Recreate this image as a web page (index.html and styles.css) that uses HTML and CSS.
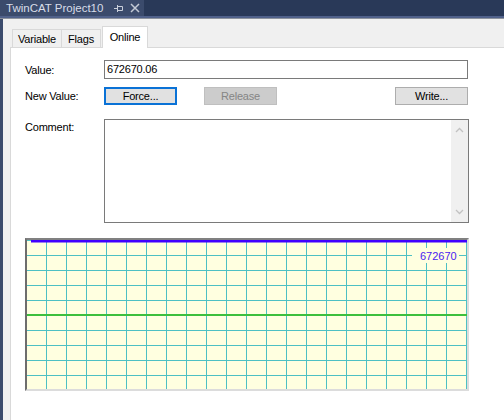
FILE: index.html
```html
<!DOCTYPE html>
<html lang="en">
<head>
    <meta charset="UTF-8">
    <title>TwinCAT Project10 - Online</title>
    <link rel="stylesheet" href="styles.css">
</head>
<body>
    <div class="titlebar">
        <div class="doc-tab">
            <span class="doc-name">TwinCAT Project10</span>
            <svg class="pin" width="9" height="8" viewBox="0 0 9 8">
                <path d="M0 4.5H3.5M3.5 1V8M3.5 2.5H8.5V6.5H3.5" fill="none" stroke="#c9cfdb" stroke-width="1"/>
            </svg>
            <svg class="close" width="10" height="10" viewBox="0 0 10 10">
                <path d="M1 1L9 9M9 1L1 9" fill="none" stroke="#c4cad6" stroke-width="1.5"/>
            </svg>
        </div>
    </div>
    <div class="frame-line"></div>

    <div class="main">
        <div class="edge"></div>
        <div class="pane">
            <div class="tabstrip">
                <div class="tab tab-variable">Variable</div>
                <div class="tab tab-flags">Flags</div>
                <div class="tab tab-online selected">Online</div>
            </div>

            <div class="page">
                <div class="row row-value">
                    <label class="field-label">Value:</label>
                    <div class="value-box">672670.06</div>
                </div>

                <div class="row row-buttons">
                    <label class="field-label">New Value:</label>
                    <div class="button-group">
                        <button class="btn focused">Force...</button>
                        <button class="btn disabled">Release</button>
                        <button class="btn btn-write">Write...</button>
                    </div>
                </div>

                <div class="row row-comment">
                    <label class="field-label label-top">Comment:</label>
                    <div class="comment-box">
                        <div class="scrollbar">
                            <svg width="9" height="6" viewBox="0 0 9 6">
                                <path d="M1 5L4.5 1.5L8 5" fill="none" stroke="#c2c2c2" stroke-width="1.3"/>
                            </svg>
                            <svg width="9" height="6" viewBox="0 0 9 6">
                                <path d="M1 1L4.5 4.5L8 1" fill="none" stroke="#c2c2c2" stroke-width="1.3"/>
                            </svg>
                        </div>
                    </div>
                </div>

                <div class="chart">
                    <svg class="chart-grid" width="440" height="149" viewBox="0 0 440 149">
                        <defs>
                            <pattern id="grid" width="20" height="15" patternUnits="userSpaceOnUse">
                                <path d="M19.5 0V15M0 0.5H20" fill="none" stroke="#4dc0c4" stroke-width="1"/>
                            </pattern>
                        </defs>
                        <rect width="440" height="149" fill="#ffffe0"/>
                        <rect width="440" height="149" fill="url(#grid)"/>
                        <!-- value label box hides grid behind it -->
                        <rect x="385" y="8" width="47" height="15" fill="#ffffe0"/>
                        <text class="chart-value" x="393" y="20">672670</text>
                        <rect x="4" y="0" width="436" height="2.5" fill="#4000ff"/>
                        <rect x="0" y="74" width="440" height="2" fill="#3dbf3d"/>
                    </svg>
                </div>
            </div>
        </div>
    </div>
</body>
</html>
```

FILE: styles.css
```css
body {
    margin: 0;
    width: 504px;
    height: 420px;
    overflow: hidden;
    background-color: white;
    font-family: 'Liberation Sans', Arial, sans-serif;
    font-size: 11px;
    letter-spacing: -0.2px;
    color: #000;
}
.titlebar {
    height: 16px;
    background-color: #293958;
    display: flex;
}
.doc-tab {
    width: 144px;
    background-color: #3b4b6c;
    display: flex;
    align-items: center;
    padding-left: 6px;
    box-sizing: border-box;
}
.doc-name {
    color: #d8dde8;
    font-size: 11.5px;
    letter-spacing: 0;
    line-height: 16px;
}
.pin {
    margin-left: 11px;
}
.close {
    margin-left: 7px;
}
.frame-line {
    height: 2px;
    background-color: #50618a;
    border-bottom: 1px solid #8d939e;
}
.main {
    display: flex;
    height: 401px;
}
.edge {
    width: 3px;
    background-color: #3b4b6c;
}
.pane {
    flex: 1;
    background-color: #f0f0f0;
    padding-left: 7px;
    display: flex;
    flex-direction: column;
}
.tabstrip {
    height: 28px;
    display: flex;
    align-items: flex-end;
    padding-left: 2px;
    position: relative;
    z-index: 1;
}
.tab {
    height: 18px;
    box-sizing: border-box;
    border: 1px solid #d9d9d9;
    border-bottom: none;
    text-align: center;
    line-height: 14px;
    padding-top: 2px;
    background-color: #f0f0f0;
}
.tab-variable {
    width: 50px;
}
.tab-flags {
    width: 40px;
    margin-left: -1px;
}
.tab-online {
    width: 46px;
    margin-left: 1px;
}
.tab.selected {
    height: 22px;
    margin-bottom: -1px;
    background-color: white;
    padding-top: 3px;
}
.page {
    flex: 1;
    background-color: white;
    border-top: 1px solid #d9d9d9;
    border-left: 1px solid #d9d9d9;
    padding: 12px 0 0 14px;
}
.row {
    display: flex;
    align-items: center;
}
.field-label {
    width: 79px;
}
.label-top {
    align-self: flex-start;
    padding-top: 2px;
}
.value-box {
    width: 364px;
    height: 19px;
    box-sizing: border-box;
    border: 1px solid #7a7a7a;
    padding-left: 2px;
    line-height: 17px;
}
.row-buttons {
    margin-top: 8px;
}
.button-group {
    width: 364px;
    display: flex;
    gap: 27px;
}
.btn {
    width: 73px;
    height: 18px;
    box-sizing: border-box;
    background-color: #e1e1e1;
    border: 1px solid #adadad;
    font-family: inherit;
    font-size: 11px;
    letter-spacing: -0.2px;
    color: #000;
    padding: 0;
    line-height: 14px;
}
.btn.focused {
    border: 2px solid #0a72d6;
}
.btn.disabled {
    background-color: #cccccc;
    border-color: #bfbfbf;
    color: #858585;
}
.btn-write {
    margin-left: auto;
}
.row-comment {
    margin-top: 14px;
}
.comment-box {
    width: 365px;
    height: 104px;
    box-sizing: border-box;
    border: 1px solid #7a7a7a;
    display: flex;
    justify-content: flex-end;
}
.scrollbar {
    width: 17px;
    background-color: #f0f0f0;
    display: flex;
    flex-direction: column;
    justify-content: space-between;
    align-items: center;
    padding: 7px 0 7px;
}
.chart {
    margin-top: 15px;
    width: 440px;
    height: 149px;
    border-top: 2px solid #808080;
    border-left: 2px solid #6d6d6d;
    border-right: 2px solid #dcdcdc;
    border-bottom: 2px solid #dcdcdc;
}
.chart-grid {
    display: block;
}
.chart-value {
    font-family: 'Liberation Sans', Arial, sans-serif;
    font-size: 11px;
    letter-spacing: 0;
    fill: #4a22f0;
}
```
